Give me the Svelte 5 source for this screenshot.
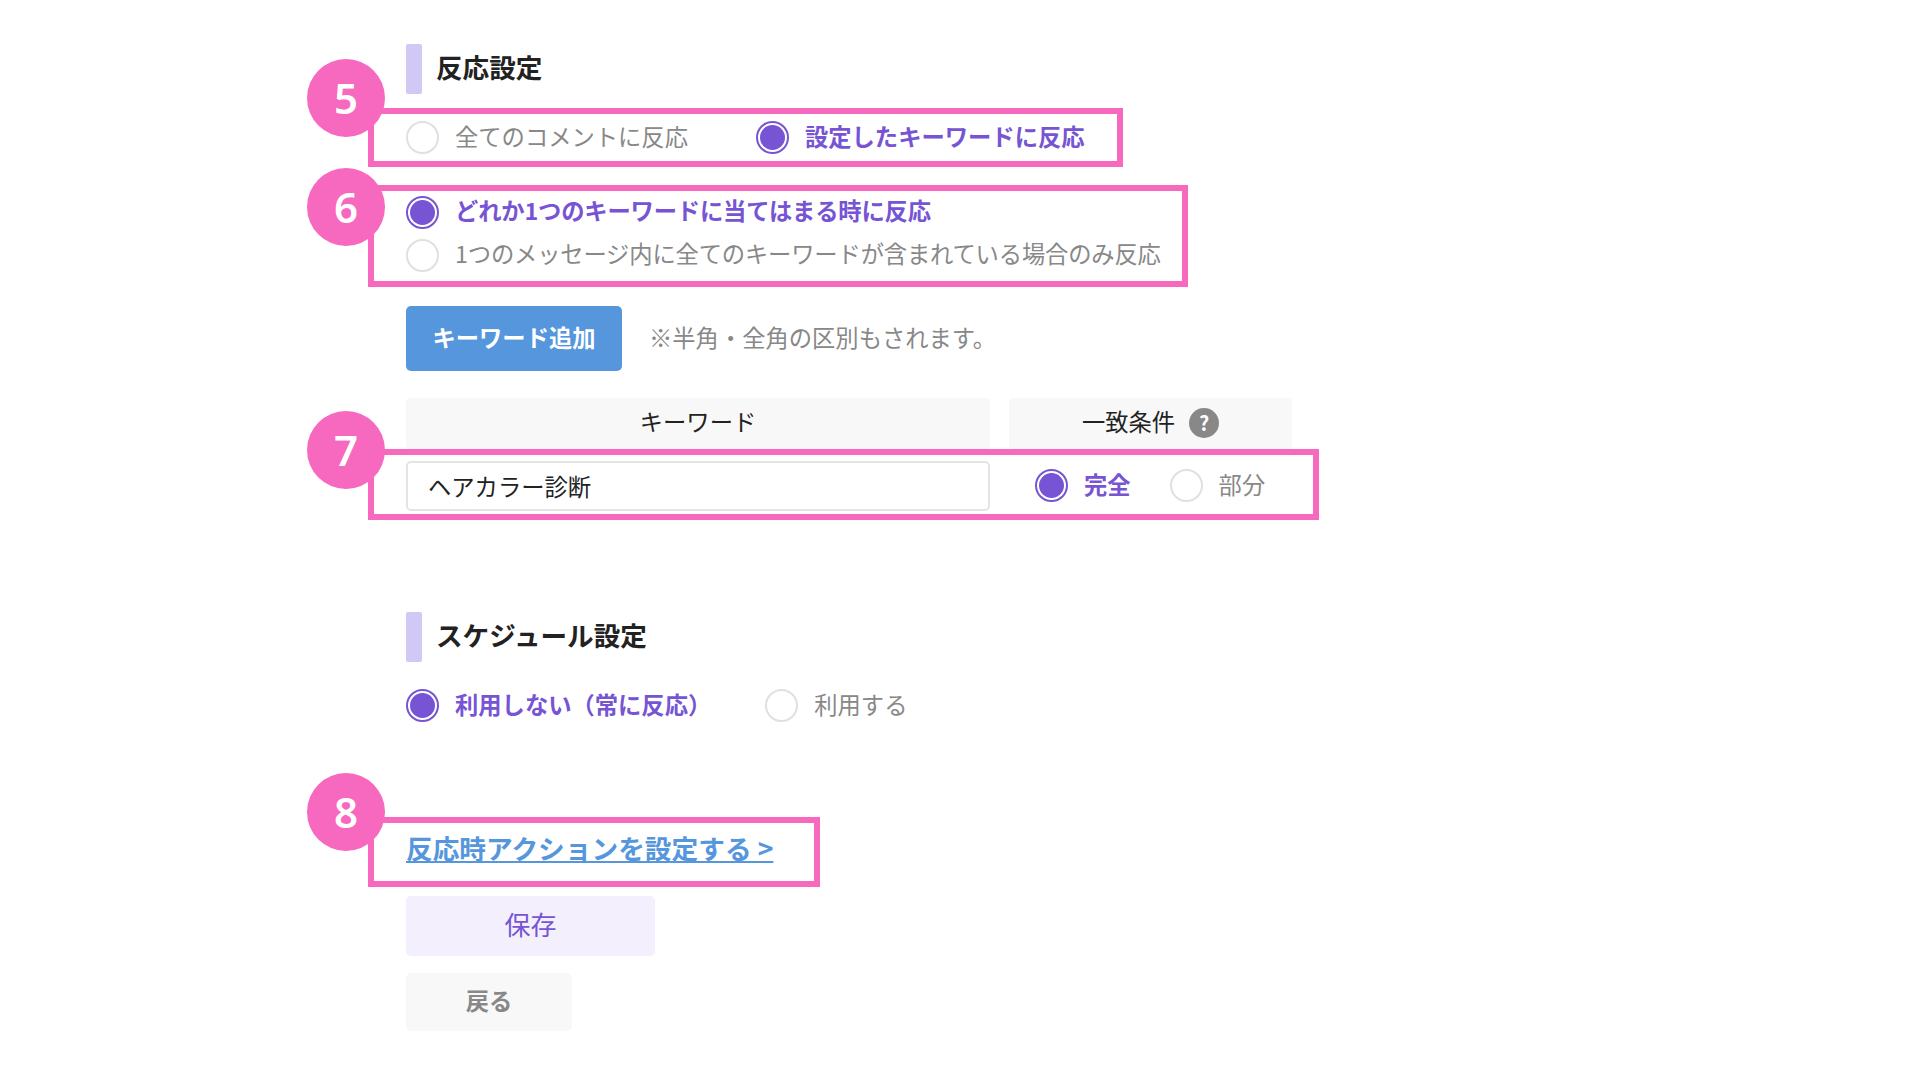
<script>
  const matchRows = [
    { label: 'どれか1つのキーワードに当てはまる時に反応', checked: true },
    { label: '1つのメッセージ内に全てのキーワードが含まれている場合のみ反応', checked: false },
  ];
</script>

{#snippet radio(name, label, checked)}
  <label class="radio" class:on={checked}>
    <input type="radio" {name} {checked} />
    <span>{label}</span>
  </label>
{/snippet}

<main class="page">
  <section class="block">
    <h2 class="heading">反応設定</h2>

    <div class="frame frame-5">
      <span class="badge">5</span>
      <div class="radio-row">
        {@render radio('react', '全てのコメントに反応', false)}
        {@render radio('react', '設定したキーワードに反応', true)}
      </div>
    </div>

    <div class="frame frame-6">
      <span class="badge">6</span>
      <div class="radio-col">
        {#each matchRows as row}
          {@render radio('match', row.label, row.checked)}
        {/each}
      </div>
    </div>

    <div class="add-row">
      <button class="add-btn" type="button">キーワード追加</button>
      <p class="note">※半角・全角の区別もされます。</p>
    </div>

    <div class="table-head">
      <div class="th">キーワード</div>
      <div class="th">一致条件 <span class="help">?</span></div>
    </div>

    <div class="frame frame-7">
      <span class="badge">7</span>
      <div class="table-row">
        <input class="keyword" type="text" value="ヘアカラー診断" />
        <div class="cond">
          {@render radio('cond', '完全', true)}
          {@render radio('cond', '部分', false)}
        </div>
      </div>
    </div>
  </section>

  <section class="block schedule">
    <h2 class="heading">スケジュール設定</h2>
    <div class="radio-row sched-row">
      {@render radio('sched', '利用しない（常に反応）', true)}
      {@render radio('sched', '利用する', false)}
    </div>
  </section>

  <div class="frame frame-8">
    <span class="badge">8</span>
    <a class="action-link" href="#action">反応時アクションを設定する &gt;</a>
  </div>

  <div class="actions">
    <button class="save" type="button">保存</button>
    <button class="back" type="button">戻る</button>
  </div>
</main>

<style>
  :global(body) {
    background: #fff;
  }

  .page {
    width: 1920px;
    height: 1080px;
    box-sizing: border-box;
    padding: 44px 0 0 406px;
    overflow: hidden;
    font-family: "Noto Sans CJK JP", "Noto Sans", sans-serif;
    font-size: 23.3px;
    color: #222;
  }

  .heading {
    display: flex;
    align-items: center;
    gap: 14px;
    box-sizing: border-box;
    height: 50px;
    margin: 0;
    padding-bottom: 4px;
    font-size: 26.6px;
    font-weight: 700;
    line-height: 1;
  }

  .heading::before {
    content: '';
    align-self: flex-start;
    width: 16px;
    height: 50px;
    border-radius: 2px;
    background: #d1c8f5;
  }

  .frame {
    position: relative;
    box-sizing: border-box;
    margin-left: -38px;
    padding-left: 32px;
    border: 6px solid #f768bf;
  }

  .badge {
    position: absolute;
    left: -67px;
    top: -55px;
    width: 78px;
    height: 78px;
    border-radius: 50%;
    background: #f768bf;
    color: #fff;
    font-size: 42px;
    font-weight: 600;
    line-height: 78px;
    text-align: center;
    font-family: "Noto Sans", sans-serif;
  }

  .frame-5 {
    width: 755px;
    height: 59px;
    margin-top: 14px;
    display: flex;
    align-items: center;
  }

  .frame-6 {
    width: 820px;
    height: 102px;
    margin-top: 18px;
    padding-bottom: 5px;
    display: flex;
    align-items: center;
  }

  .frame-6 .badge {
    top: -23px;
  }

  .radio-row {
    display: flex;
    gap: 68px;
  }

  .radio-col {
    display: flex;
    flex-direction: column;
    gap: 9px;
    letter-spacing: -0.16px;
  }

  .radio {
    display: flex;
    align-items: center;
    gap: 16px;
    height: 34px;
    color: #888;
    line-height: 1;
    white-space: nowrap;
  }

  .radio span {
    padding-bottom: 2px;
  }

  .radio.on {
    color: #7654d4;
    font-weight: 700;
  }

  .radio input {
    appearance: none;
    box-sizing: border-box;
    width: 33px;
    height: 33px;
    margin: 0;
    padding: 2px;
    border: 2px solid #e0e0e0;
    border-radius: 50%;
    background: #fff;
  }

  .radio input:checked {
    border-color: #7654d4;
    background: #7654d4;
    background-clip: content-box;
  }

  .add-row {
    display: flex;
    align-items: center;
    gap: 27px;
    margin-top: 19px;
  }

  .add-btn {
    width: 216px;
    height: 65px;
    padding: 0 0 4px;
    border: 0;
    border-radius: 5px;
    background: #5596dc;
    color: #fff;
    font: inherit;
    font-weight: 700;
  }

  .note {
    margin: 0 0 4px;
    color: #888;
  }

  .table-head {
    display: grid;
    grid-template-columns: 584px 283px;
    gap: 19px;
    margin-top: 27px;
  }

  .th {
    display: flex;
    align-items: center;
    justify-content: center;
    gap: 14px;
    box-sizing: border-box;
    height: 51px;
    padding-bottom: 6px;
    border-radius: 4px;
    background: #f8f8f8;
  }

  .help {
    width: 30px;
    height: 30px;
    margin-top: 4px;
    border-radius: 50%;
    background: #888;
    color: #fff;
    font-size: 20px;
    font-weight: 700;
    line-height: 30px;
    text-align: center;
  }

  .frame-7 {
    width: 951px;
    height: 71px;
    display: flex;
    align-items: center;
  }

  .frame-7 .badge {
    top: -44px;
  }

  .table-row {
    display: flex;
    align-items: center;
  }

  .keyword {
    box-sizing: border-box;
    width: 584px;
    height: 50px;
    margin-top: 2px;
    padding: 0 20px;
    border: 2px solid #e4e4e4;
    border-radius: 5px;
    color: #222;
    font: inherit;
  }

  .cond {
    display: flex;
    gap: 39px;
    margin: 2px 0 0 45px;
  }

  .schedule {
    margin-top: 92px;
  }

  .sched-row {
    margin-top: 26px;
    gap: 54px;
  }

  .sched-row span {
    padding-bottom: 0;
  }

  .frame-8 {
    width: 452px;
    height: 70px;
    margin-top: 95px;
    padding-bottom: 10px;
    display: flex;
    align-items: center;
  }

  .frame-8 .badge {
    top: -50px;
  }

  .action-link {
    color: #5596dc;
    font-size: 26.7px;
    font-weight: 700;
    text-decoration: underline;
  }

  .actions {
    display: flex;
    flex-direction: column;
    align-items: flex-start;
    gap: 17px;
    margin-top: 9px;
  }

  .save {
    width: 249px;
    height: 60px;
    padding: 0 0 6px;
    border: 0;
    border-radius: 5px;
    background: #f3effd;
    color: #7654d4;
    font: inherit;
    font-size: 26px;
  }

  .back {
    width: 166px;
    height: 58px;
    padding: 0 0 5px;
    border: 0;
    border-radius: 5px;
    background: #f8f8f8;
    color: #888;
    font: inherit;
    font-weight: 700;
  }
</style>
